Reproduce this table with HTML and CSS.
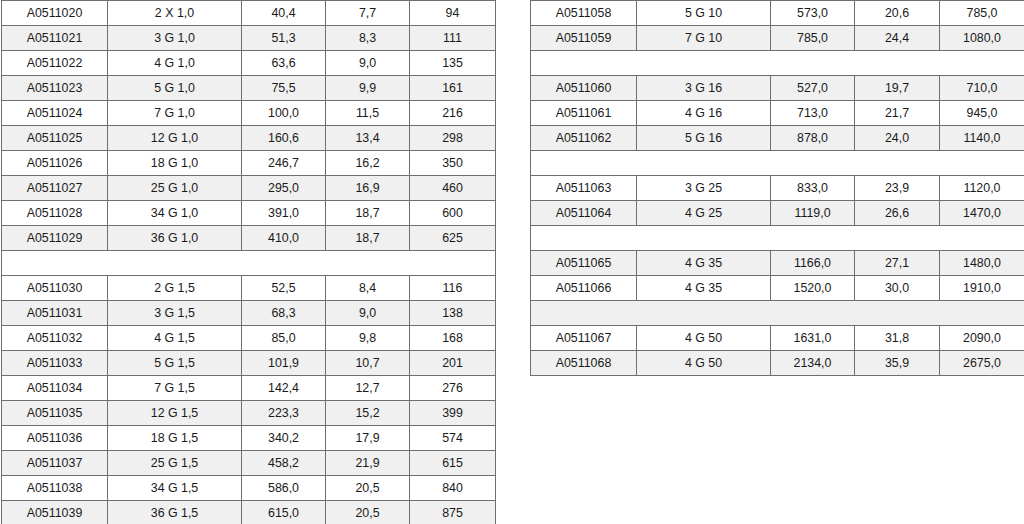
FILE: index.html
```html
<!DOCTYPE html>
<html lang="en">
<head>
<meta charset="utf-8">
<title>Cable table</title>
<link rel="stylesheet" href="styles.css">
</head>
<body>
<div class="page">
  <table class="grid grid-left">
    <colgroup><col class="c1"><col class="c2"><col class="c3"><col class="c4"><col class="c5"></colgroup>
    <tbody>
      <tr><td>A0511020</td><td>2 X 1,0</td><td>40,4</td><td>7,7</td><td>94</td></tr>
      <tr class="alt"><td>A0511021</td><td>3 G 1,0</td><td>51,3</td><td>8,3</td><td>111</td></tr>
      <tr><td>A0511022</td><td>4 G 1,0</td><td>63,6</td><td>9,0</td><td>135</td></tr>
      <tr class="alt"><td>A0511023</td><td>5 G 1,0</td><td>75,5</td><td>9,9</td><td>161</td></tr>
      <tr><td>A0511024</td><td>7 G 1,0</td><td>100,0</td><td>11,5</td><td>216</td></tr>
      <tr class="alt"><td>A0511025</td><td>12 G 1,0</td><td>160,6</td><td>13,4</td><td>298</td></tr>
      <tr><td>A0511026</td><td>18 G 1,0</td><td>246,7</td><td>16,2</td><td>350</td></tr>
      <tr class="alt"><td>A0511027</td><td>25 G 1,0</td><td>295,0</td><td>16,9</td><td>460</td></tr>
      <tr><td>A0511028</td><td>34 G 1,0</td><td>391,0</td><td>18,7</td><td>600</td></tr>
      <tr class="alt"><td>A0511029</td><td>36 G 1,0</td><td>410,0</td><td>18,7</td><td>625</td></tr>
      <tr class="blank"><td colspan="5"></td></tr>
      <tr><td>A0511030</td><td>2 G 1,5</td><td>52,5</td><td>8,4</td><td>116</td></tr>
      <tr class="alt"><td>A0511031</td><td>3 G 1,5</td><td>68,3</td><td>9,0</td><td>138</td></tr>
      <tr><td>A0511032</td><td>4 G 1,5</td><td>85,0</td><td>9,8</td><td>168</td></tr>
      <tr class="alt"><td>A0511033</td><td>5 G 1,5</td><td>101,9</td><td>10,7</td><td>201</td></tr>
      <tr><td>A0511034</td><td>7 G 1,5</td><td>142,4</td><td>12,7</td><td>276</td></tr>
      <tr class="alt"><td>A0511035</td><td>12 G 1,5</td><td>223,3</td><td>15,2</td><td>399</td></tr>
      <tr><td>A0511036</td><td>18 G 1,5</td><td>340,2</td><td>17,9</td><td>574</td></tr>
      <tr class="alt"><td>A0511037</td><td>25 G 1,5</td><td>458,2</td><td>21,9</td><td>615</td></tr>
      <tr><td>A0511038</td><td>34 G 1,5</td><td>586,0</td><td>20,5</td><td>840</td></tr>
      <tr class="alt"><td>A0511039</td><td>36 G 1,5</td><td>615,0</td><td>20,5</td><td>875</td></tr>
    </tbody>
  </table>
  <table class="grid grid-right">
    <colgroup><col class="c1"><col class="c2"><col class="c3"><col class="c4"><col class="c5"></colgroup>
    <tbody>
      <tr><td>A0511058</td><td>5 G 10</td><td>573,0</td><td>20,6</td><td>785,0</td></tr>
      <tr class="alt"><td>A0511059</td><td>7 G 10</td><td>785,0</td><td>24,4</td><td>1080,0</td></tr>
      <tr class="blank"><td colspan="5"></td></tr>
      <tr class="alt"><td>A0511060</td><td>3 G 16</td><td>527,0</td><td>19,7</td><td>710,0</td></tr>
      <tr><td>A0511061</td><td>4 G 16</td><td>713,0</td><td>21,7</td><td>945,0</td></tr>
      <tr class="alt"><td>A0511062</td><td>5 G 16</td><td>878,0</td><td>24,0</td><td>1140,0</td></tr>
      <tr class="blank"><td colspan="5"></td></tr>
      <tr><td>A0511063</td><td>3 G 25</td><td>833,0</td><td>23,9</td><td>1120,0</td></tr>
      <tr class="alt"><td>A0511064</td><td>4 G 25</td><td>1119,0</td><td>26,6</td><td>1470,0</td></tr>
      <tr class="blank"><td colspan="5"></td></tr>
      <tr class="alt"><td>A0511065</td><td>4 G 35</td><td>1166,0</td><td>27,1</td><td>1480,0</td></tr>
      <tr><td>A0511066</td><td>4 G 35</td><td>1520,0</td><td>30,0</td><td>1910,0</td></tr>
      <tr class="blank alt"><td colspan="5"></td></tr>
      <tr><td>A0511067</td><td>4 G 50</td><td>1631,0</td><td>31,8</td><td>2090,0</td></tr>
      <tr class="alt"><td>A0511068</td><td>4 G 50</td><td>2134,0</td><td>35,9</td><td>2675,0</td></tr>
    </tbody>
  </table>
</div>
</body>
</html>
```

FILE: styles.css
```css
html, body {
  margin: 0;
  padding: 0;
  background: #ffffff;
}

.page {
  display: flex;
  align-items: flex-start;
  gap: 34px;
  padding-left: 1px;
}

.grid {
  border-collapse: collapse;
  table-layout: fixed;
  font-family: "Liberation Sans", Arial, sans-serif;
  font-size: 12.4px;
  color: #1a1a1a;
}

.grid-left { width: 494px; }
.grid-right { width: 494px; }

.grid-left .c1 { width: 106px; }
.grid-left .c2 { width: 134px; }
.grid-left .c3 { width: 84px; }
.grid-left .c4 { width: 84px; }
.grid-left .c5 { width: 86px; }

.grid-right .c1 { width: 106px; }
.grid-right .c2 { width: 134px; }
.grid-right .c3 { width: 84px; }
.grid-right .c4 { width: 85px; }
.grid-right .c5 { width: 85px; }

.grid tr { height: 25px; }

.grid td {
  border: 1px solid #6f6f6f;
  padding: 0;
  text-align: center;
  vertical-align: middle;
  line-height: 14px;
  white-space: nowrap;
}

.grid tr.alt td { background: #f0f0f0; }
```
